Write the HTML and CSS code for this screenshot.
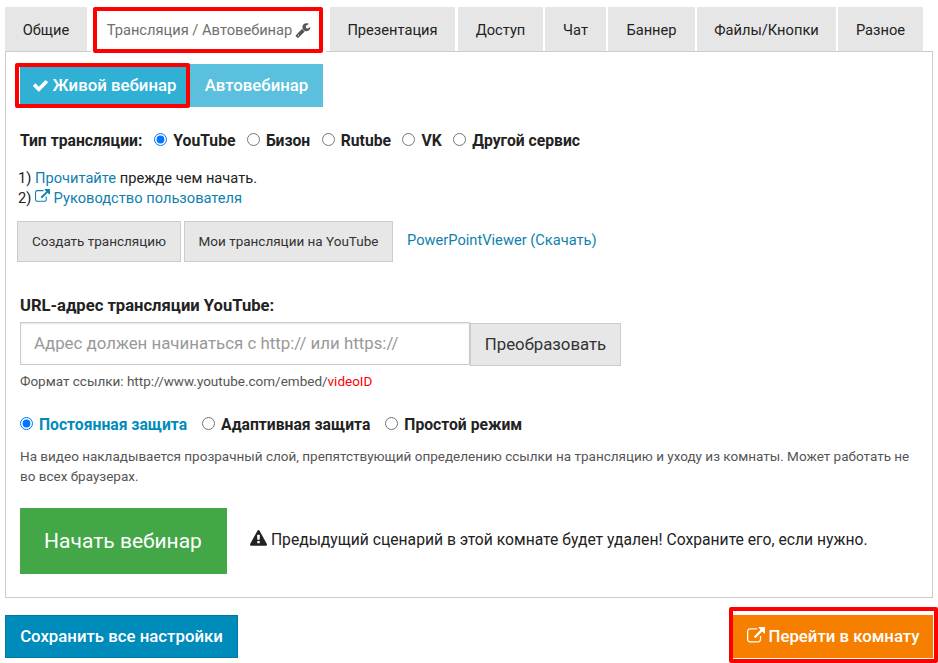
FILE: index.html
```html
<!DOCTYPE html>
<html lang="ru">
<head>
<meta charset="utf-8">
<title>Настройки вебинара</title>
<link rel="stylesheet" href="styles.css">
</head>
<body>
<div class="page">
  <nav class="tabs">
    <a class="tab t-1">Общие</a>
    <a class="tab tab-active t-2">Трансляция / Автовебинар <svg class="ico ico-wrench" viewBox="0 0 1792 1792"><path d="M448 1472q0-26-19-45t-45-19-45 19-19 45 19 45 45 19 45-19 19-45zm644-420l-682 682q-37 37-90 37-52 0-91-37l-106-108q-38-36-38-90 0-53 38-91l681-681q39 98 114.5 173.5t173.5 114.5zm634-435q0 39-23 106-47 134-164.5 217.5t-258.5 83.5q-185 0-316.5-131.5t-131.5-316.5 131.5-316.5 316.5-131.5q58 0 121.5 16.5t107.5 46.5q16 11 16 28t-16 28l-293 169v224l193 107q5-3 79-48.5t135.5-81 70.5-35.5q15 0 23.5 10t8.5 25z"/></svg><span class="mark mark-tab"></span></a>
    <a class="tab t-3">Презентация</a>
    <a class="tab t-4">Доступ</a>
    <a class="tab t-5">Чат</a>
    <a class="tab t-6">Баннер</a>
    <a class="tab t-7">Файлы/Кнопки</a>
    <a class="tab t-8">Разное</a>
  </nav>

  <main class="panel">
    <div class="segment">
      <a class="seg seg-on"><svg class="ico ico-check" viewBox="0 0 1792 1792"><path d="M1671 566q0 40-28 68l-724 724-136 136q-28 28-68 28t-68-28l-136-136-362-362q-28-28-28-68t28-68l136-136q28-28 68-28t68 28l294 295 656-657q28-28 68-28t68 28l136 136q28 28 28 68z"/></svg> Живой вебинар<span class="mark mark-seg"></span></a>
      <a class="seg seg-off">Автовебинар</a>
    </div>

    <div class="radio-row row-type">
      <span class="row-label">Тип трансляции:</span>
      <label class="radio"><input type="radio" name="svc" checked>YouTube</label>
      <label class="radio"><input type="radio" name="svc">Бизон</label>
      <label class="radio"><input type="radio" name="svc">Rutube</label>
      <label class="radio"><input type="radio" name="svc">VK</label>
      <label class="radio"><input type="radio" name="svc">Другой сервис</label>
    </div>

    <div class="steps">
      <div>1) <a class="link">Прочитайте</a> прежде чем начать.</div>
      <div>2) <a class="link"><svg class="ico ico-ext-small" viewBox="0 0 1792 1792"><path d="M1408 928v320q0 119-84.5 203.5t-203.5 84.5h-832q-119 0-203.5-84.5t-84.5-203.5v-832q0-119 84.5-203.5t203.5-84.5h704q14 0 23 9t9 23v64q0 14-9 23t-23 9h-704q-66 0-113 47t-47 113v832q0 66 47 113t113 47h832q66 0 113-47t47-113v-320q0-14 9-23t23-9h64q14 0 23 9t9 23zm384-864v512q0 26-19 45t-45 19-45-19l-176-176-652 652q-10 10-23 10t-23-10l-114-114q-10-10-10-23t10-23l652-652-176-176q-19-19-19-45t19-45 45-19h512q26 0 45 19t19 45z"/></svg> Руководство пользователя</a></div>
    </div>

    <div class="actions">
      <a class="btn btn-create">Создать трансляцию</a>
      <a class="btn btn-mine">Мои трансляции на YouTube</a>
      <a class="link link-ppt">PowerPointViewer (Скачать)</a>
    </div>

    <div class="url-label">URL-адрес трансляции YouTube:</div>
    <div class="url-group">
      <input class="url-input" type="text" placeholder="Адрес должен начинаться с http:// или https://">
      <a class="url-btn">Преобразовать</a>
    </div>
    <div class="hint">Формат ссылки: http://www.youtube.com/embed/<span class="red">videoID</span></div>

    <div class="radio-row row-protect">
      <label class="radio radio-on"><input type="radio" name="prot" checked>Постоянная защита</label>
      <label class="radio"><input type="radio" name="prot">Адаптивная защита</label>
      <label class="radio"><input type="radio" name="prot">Простой режим</label>
    </div>
    <p class="note">На видео накладывается прозрачный слой, препятствующий определению ссылки на трансляцию и уходу из комнаты. Может работать не во всех браузерах.</p>

    <div class="start">
      <a class="btn-start">Начать вебинар</a>
      <span class="warn"><svg class="ico ico-warn" viewBox="0 0 1792 1792"><path d="M1024 1375v-190q0-14-9.5-23.5t-22.5-9.5h-192q-13 0-22.5 9.5t-9.5 23.5v190q0 14 9.5 23.5t22.5 9.5h192q13 0 22.5-9.5t9.5-23.5zm-2-374l18-459q0-12-10-19-13-11-24-11h-220q-11 0-24 11-10 7-10 21l17 457q0 10 10 16.5t24 6.5h185q14 0 23.5-6.5t10.5-16.5zm-14-934l768 1408q35 63-2 126-17 29-46.5 46t-63.5 17h-1536q-34 0-63.5-17t-46.5-46q-37-63-2-126l768-1408q17-31 47-49t65-18 65 18 47 49z"/></svg> Предыдущий сценарий в этой комнате будет удален! Сохраните его, если нужно.</span>
    </div>
  </main>

  <footer class="footer">
    <a class="btn-save">Сохранить все настройки</a>
    <a class="btn-go"><svg class="ico ico-ext" viewBox="0 0 1792 1792"><path d="M1408 928v320q0 119-84.5 203.5t-203.5 84.5h-832q-119 0-203.5-84.5t-84.5-203.5v-832q0-119 84.5-203.5t203.5-84.5h704q14 0 23 9t9 23v64q0 14-9 23t-23 9h-704q-66 0-113 47t-47 113v832q0 66 47 113t113 47h832q66 0 113-47t47-113v-320q0-14 9-23t23-9h64q14 0 23 9t9 23zm384-864v512q0 26-19 45t-45 19-45-19l-176-176-652 652q-10 10-23 10t-23-10l-114-114q-10-10-10-23t10-23l652-652-176-176q-19-19-19-45t19-45 45-19h512q26 0 45 19t19 45z"/></svg> Перейти в комнату<span class="mark mark-go"></span></a>
  </footer>
</div>
</body>
</html>
```

FILE: styles.css
```css
* { box-sizing: border-box; }
html, body { margin: 0; padding: 0; background: #fff; overflow: hidden; }
body { font-family: Roboto, "Liberation Sans", sans-serif; font-size: 14.67px; color: #222; }
.page { width: 938px; height: 663px; padding: 7px 5px 0; }
a { display: inline-block; }
.ico { fill: currentColor; display: inline-block; vertical-align: -2px; }

/* red annotation frames */
.mark { position: absolute; border: 4px solid #f00; border-radius: 2px; pointer-events: none; }
.mark-tab { left: 2px; right: 3px; top: 0; bottom: -1px; }
.mark-seg { left: -5px; right: 0; top: -1px; bottom: -1px; }
.mark-go { left: -4px; right: -5px; top: -8px; bottom: -5px; }

/* tabs */
.tabs { display: flex; gap: 2px; height: 44px; width: 928px; }
.tab { position: relative; display: flex; align-items: center; justify-content: center; background: #e6e6e6; color: #222; font-size: 14.67px; height: 44px; padding-top: 1px; }
.tab-active { background: #fff; color: #6f6f6f; z-index: 1; height: 45px; margin: 0 2px; gap: 3px; padding-left: 1px; }
.t-1 { width: 82px; }
.t-2 { width: 235px; }
.t-3 { width: 125px; margin-right: 1px; }
.t-4 { width: 85px; }
.t-5 { width: 61px; }
.t-6 { width: 87px; }
.t-7 { width: 139px; }
.t-8 { width: 85px; }
.ico-wrench { width: 16px; height: 16px; color: #555; }

/* panel */
.panel { width: 928px; height: 547px; border: 1px solid #ccc; padding: 12px 14px 0; }

.segment { display: flex; height: 43px; }
.seg { position: relative; display: flex; align-items: center; justify-content: center; color: #fff; font-size: 16.8px; font-weight: 500; padding-bottom: 1px; }
.seg-on { width: 170px; background: #31b0d5; gap: 4px; padding-right: 2px; }
.seg-off { width: 133px; background: #5bc0de; }
.ico-check { width: 17px; height: 17px; }

.radio-row { display: flex; align-items: center; font-weight: 700; font-size: 15.7px; color: #222; height: 20px; }
.row-type { margin-top: 23px; }
.row-label { margin-right: 12px; }
.radio { display: flex; align-items: center; margin-right: 11.5px; }
.radio input { margin: 0 6px 0 0; width: 13px; height: 13px; flex: none; position: relative; top: -1px; }
.row-protect .radio { margin-right: 15px; }
.radio-on { color: #008cba; }

.steps { margin-top: 18px; margin-left: -2px; line-height: 20px; }
.link { color: #0f7fae; }
.ico-ext-small { width: 15px; height: 15px; vertical-align: -1px; }

.actions { display: flex; margin-top: 13px; margin-left: -3px; height: 41px; }
.btn { display: flex; align-items: center; justify-content: center; background: #e7e7e7; border: 1px solid #ccc; color: #333; font-size: 13.5px; height: 41px; padding-bottom: 2px; }
.btn-create { width: 164px; }
.btn-mine { width: 209px; margin-left: 3px; }
.link-ppt { margin-left: 14px; margin-top: 10px; }

.url-label { margin-top: 34px; font-weight: 700; font-size: 16.6px; line-height: 20px; }
.url-group { display: flex; margin-top: 6px; align-items: flex-start; }
.url-input { width: 450px; height: 43px; border: 1px solid #ccc; box-shadow: inset 0 1px 2px rgba(0,0,0,.1); padding: 0 14px 2px 13px; font: 16.85px Roboto, sans-serif; color: #222; outline: 0; }
.url-input::placeholder { color: #999; opacity: 1; }
.url-btn { display: flex; align-items: center; justify-content: center; width: 151px; height: 43px; margin-top: 1px; background: #e7e7e7; border: 1px solid #ccc; color: #333; font-size: 16.8px; padding-bottom: 2px; }
.hint { margin-top: 5px; font-size: 13.5px; line-height: 20px; color: #555; }
.red { color: #f00; }

.row-protect { margin-top: 23px; }
.note { margin: 12px 0 0; font-size: 13.5px; line-height: 20px; color: #555; }

.start { display: flex; align-items: center; margin-top: 22px; }
.btn-start { display: flex; align-items: center; justify-content: center; width: 207px; height: 66px; background: #43a647; color: #fff; font-size: 21px; font-weight: 400; padding-right: 1px; }
.warn { margin-left: 23px; font-size: 15.7px; color: #222; position: relative; top: -2px; }
.ico-warn { width: 17px; height: 17px; }

/* footer */
.footer { display: flex; justify-content: space-between; margin-top: 17px; width: 928px; }
.btn-save, .btn-go { position: relative; display: flex; align-items: center; justify-content: center; height: 43px; color: #fff; font-size: 16.8px; font-weight: 500; padding-bottom: 1px; }
.btn-save { width: 233px; background: #008cba; border: 1px solid #0079a1; }
.btn-go { width: 200px; background: #f77f00; gap: 4px; }
.ico-ext { width: 18px; height: 18px; }
```
